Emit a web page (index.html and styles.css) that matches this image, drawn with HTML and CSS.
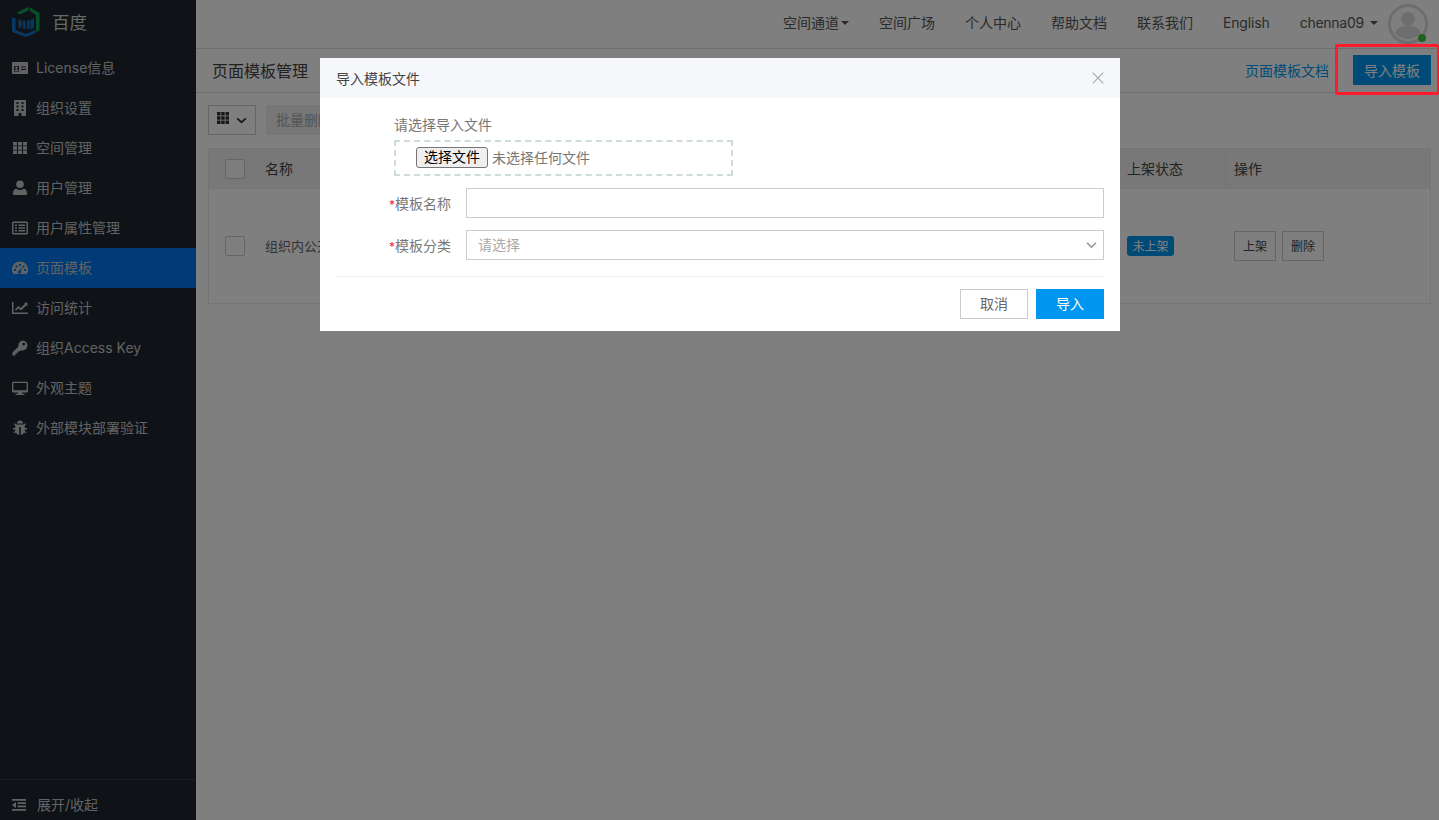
FILE: index.html
```html
<!DOCTYPE html>
<html lang="zh-CN">
<head>
<meta charset="utf-8">
<title>页面模板管理</title>
<link rel="stylesheet" href="styles.css">
</head>
<body>
<div class="app">
  <aside class="sidebar">
    <div class="brand">
      <svg class="logo" viewBox="0 0 28 30" width="28" height="30">
        <path fill="#10a050" d="M5 5.500 16 0l1 3-9 4.500zM18 .5l9.500 5.500v17L24 25V8l-6-4z"/>
        <path fill="#1273c4" d="M0 10l3.500 1.500V23L14 27l9-4 1 3-10 4-14-5z"/>
        <path fill="#1273c4" d="M6.500 12.500 10 14v6l-1.500-.6v2.200l-2-.8zM11 13l2.500 1v8.500L11 21.500zM15 14l2.500-1v8.500l-2.500 1zM18.500 13 22 11.500v9.500l-3.500 1.300z"/>
      </svg>
      <span class="brand-name">百度</span>
    </div>
    <nav class="menu">
      <a class="menu-item"><svg class="ico" viewBox="0 0 16 16"><path fill-rule="evenodd" d="M0 2h16v12H0zM2 6v6h5V6zm7 .5v1h5v-1zm0 2.500v1h5V9z"/><circle cx="4.500" cy="7.800" r="1.300"/><path d="M2.500 11.500c0-3 4-3 4 0z"/></svg>License信息</a>
      <a class="menu-item"><svg class="ico" viewBox="0 0 16 16"><path fill-rule="evenodd" d="M2 0h12v16H9.500v-3h-3v3H2zm2.500 2v2h2V2zm0 3.500v2h2v-2zm0 3.500v2h2V9zm5-7v2h2V2zm0 3.500v2h2v-2zm0 3.500v2h2V9z"/></svg>组织设置</a>
      <a class="menu-item"><svg class="ico" viewBox="0 0 16 16"><path d="M1 2h4v3.500H1zm5 0h4v3.500H6zm5 0h4v3.500h-4zM1 6.300h4v3.500H1zm5 0h4v3.500H6zm5 0h4v3.500h-4zM1 10.600h4v3.500H1zm5 0h4v3.500H6zm5 0h4v3.500h-4z"/></svg>空间管理</a>
      <a class="menu-item"><svg class="ico" viewBox="0 0 16 16"><circle cx="8" cy="4.300" r="3.800"/><path d="M1.800 15c-.8 0-1-.5-1-1.200 0-3 1.500-5 3.700-5 1 .8 2.200 1.200 3.500 1.200s2.500-.4 3.500-1.200c2.200 0 3.700 2 3.700 5 0 .7-.2 1.200-1 1.200z"/></svg>用户管理</a>
      <a class="menu-item"><svg class="ico" viewBox="0 0 16 16"><path fill-rule="evenodd" d="M1.500 1.500h13A1.500 1.500 0 0 1 16 3v10a1.500 1.500 0 0 1-1.500 1.500h-13A1.500 1.500 0 0 1 0 13V3a1.500 1.500 0 0 1 1.500-1.500zm0 1.500v10h13V3zM3 4.500h2V6H3zm3.500 0H13V6H6.500zM3 7.300h2v1.500H3zm3.500 0H13v1.500H6.500zM3 10h2v1.500H3zm3.500 0H13v1.500H6.500z"/></svg>用户属性管理</a>
      <a class="menu-item active"><svg class="ico" viewBox="0 0 16 16"><path fill-rule="evenodd" d="M8 1.500c4.400 0 8 3.500 8 8 0 1.700-.5 3.200-1.300 4.500H1.300A8 8 0 0 1 0 9.500c0-4.500 3.600-8 8-8zM7 4v2h2V4zM3.500 5.500v2h2v-2zm7 0v2h2v-2zM2 9v2h2V9zm10 0v2h2V9zm-1.800-2L7.300 10.500a1.600 1.600 0 1 0 1.600 1.200z"/></svg>页面模板</a>
      <a class="menu-item"><svg class="ico" viewBox="0 0 16 16"><path d="M0 2h1.500v10.500H16V14H0z"/><path d="M3 9.500 6.300 6l2.500 2L13 3.800l-1-1h3.500v3.500l-1-1-5.500 5.200L6.500 8.300 4 10.800z"/></svg>访问统计</a>
      <a class="menu-item"><svg class="ico" viewBox="0 0 16 16"><path fill-rule="evenodd" d="M10.500 0.500a5 5 0 1 1-1.800 9.700L7.500 11.500H5.500v2h-2V15.500H.5v-3l6-6A5 5 0 0 1 10.500.5zm1.200 2.200a1.400 1.400 0 1 0 0 2.800 1.400 1.400 0 0 0 0-2.800z"/></svg>组织Access Key</a>
      <a class="menu-item"><svg class="ico" viewBox="0 0 18 16"><path fill-rule="evenodd" d="M1.500 1h15A1.500 1.500 0 0 1 18 2.500v9a1.500 1.500 0 0 1-1.500 1.500H11l.5 1.500H14V16H4v-1.500h2.500L7 13H1.500A1.500 1.500 0 0 1 0 11.500v-9A1.500 1.500 0 0 1 1.500 1zm0 1.500v8h15v-8z"/></svg>外观主题</a>
      <a class="menu-item"><svg class="ico" viewBox="0 0 16 16"><path d="M5 3.500a3 3 0 0 1 6 0zM4.200 4.500h7.600l1.200-1.300 1 1-1.300 1.300V8H15v1.500h-2.300v1.300l1.700 1.700-1 1-1.300-1.300A4.200 4.200 0 0 1 8.800 15V7h-1.600v8a4.200 4.200 0 0 1-3.300-2.800L2.600 13.500l-1-1 1.700-1.700V9.500H1V8h2.300V5.500L2 4.200l1-1z"/></svg>外部模块部署验证</a>
    </nav>
    <div class="collapse"><svg class="ico" viewBox="0 0 16 16"><path d="M1 2h14v1.800H1zM6.500 5.200H15V7H6.500zM6.500 8.500H15v1.800H6.500zM1 12h14v1.800H1zM5 5v6L1 8z"/></svg><span>展开/收起</span></div>
  </aside>

  <div class="main">
    <header class="topbar">
      <a class="top-link">空间通道<i class="caret tight"></i></a>
      <a class="top-link">空间广场</a>
      <a class="top-link">个人中心</a>
      <a class="top-link">帮助文档</a>
      <a class="top-link">联系我们</a>
      <a class="top-link lang">English</a>
      <a class="user">chenna09<i class="caret"></i></a>
      <span class="avatar">
        <svg viewBox="0 0 40 40" width="40" height="40">
          <circle cx="20" cy="20" r="18.500" fill="#fff" stroke="#dcdcdc" stroke-width="3"/>
          <circle cx="20" cy="15" r="7" fill="#dcdcdc"/>
          <path d="M7 29c2-6 8-7 13-7s11 1 13 7a17 17 0 0 1-26 0z" fill="#dcdcdc"/>
        </svg>
        <i class="status"></i>
      </span>
    </header>

    <div class="pagehead">
      <h1 class="pagetitle">页面模板管理</h1>
      <a class="doc-link">页面模板文档</a>
      <button class="btn-primary">导入模板</button>
    </div>

    <div class="content">
      <div class="toolbar">
        <button class="btn-grid">
          <svg class="grid-ico" viewBox="0 0 12 12" width="12" height="12"><path fill="#333" d="M0 0h3.500v3.500H0zm4.200 0h3.500v3.500H4.200zm4.300 0H12v3.500H8.500zM0 4.200h3.500v3.500H0zm4.200 0h3.500v3.500H4.200zm4.300 0H12v3.500H8.500zM0 8.500h3.500V12H0zm4.200 0h3.500V12H4.200zm4.300 0H12V12H8.500z"/></svg>
          <svg viewBox="0 0 12 8" width="11" height="7"><path fill="none" stroke="#333" stroke-width="2" d="M1 1.500 6 6l5-4.500"/></svg>
        </button>
        <button class="btn-batch">批量删除</button>
      </div>

      <div class="table">
        <div class="row head">
          <div class="cell c-check"><span class="check"></span></div>
          <div class="cell c-name">名称</div>
          <div class="cell c-status">上架状态</div>
          <div class="cell c-ops">操作</div>
        </div>
        <div class="row body">
          <div class="cell c-check"><span class="check"></span></div>
          <div class="cell c-name muted">组织内公开模板</div>
          <div class="cell c-status"><span class="tag">未上架</span></div>
          <div class="cell c-ops"><button class="btn-small">上架</button><button class="btn-small">删除</button></div>
        </div>
      </div>
    </div>
  </div>
</div>

<div class="overlay">
  <div class="modal">
    <div class="modal-head">
      <span class="modal-title">导入模板文件</span>
      <svg class="close" viewBox="0 0 12 12" width="12" height="12"><path fill="none" stroke="#aaa" stroke-width="1.200" d="M.7.7l10.600 10.600M11.300.7.700 11.300"/></svg>
    </div>
    <div class="modal-body">
      <div class="file-label">请选择导入文件</div>
      <div class="file-box"><button class="file-btn">选择文件</button><span class="file-none">未选择任何文件</span></div>
      <div class="field">
        <label class="field-label"><i>*</i>模板名称</label>
        <div class="input"></div>
      </div>
      <div class="field">
        <label class="field-label"><i>*</i>模板分类</label>
        <div class="input select">
          <span class="placeholder">请选择</span>
          <svg viewBox="0 0 12 8" width="11" height="7"><path fill="none" stroke="#999" stroke-width="1.800" d="M1 1l5 5 5-5"/></svg>
        </div>
      </div>
    </div>
    <div class="modal-foot">
      <button class="btn-cancel">取消</button>
      <button class="btn-ok">导入</button>
    </div>
  </div>
</div>
<div class="annotation"></div>
</body>
</html>
```

FILE: styles.css
```css
* { box-sizing: border-box; }
html, body { margin: 0; padding: 0; height: 100%; overflow: hidden; }
body {
  font-family: Inter, "Noto Sans CJK SC", "Liberation Sans", sans-serif;
  font-size: 14px;
  color: #333;
  background: #fff;
}
button { font-family: inherit; cursor: pointer; }
a { text-decoration: none; color: inherit; }

.app { display: flex; height: 820px; }

.sidebar {
  width: 196px;
  flex: none;
  background: #1f2630;
  color: #c4c4c4;
  display: flex;
  flex-direction: column;
}
.brand { height: 48px; display: flex; align-items: center; padding: 0 0 4px 12px; gap: 12px; }
.logo { flex: none; }
.brand-name { font-size: 17.500px; color: #d0d0d0; margin-bottom: 2px; }
.menu { flex: 1; }
.menu-item { height: 40px; display: flex; align-items: center; padding: 0 0 2px 12px; }
.menu-item.active { background: #0074ee; }
.ico { width: 16px; height: 16px; fill: currentColor; flex: none; margin: 2px 8px 0 0; }
.collapse {
  height: 41px;
  border-top: 1px solid #323a45;
  display: flex;
  align-items: center;
  padding: 8px 0 0 11px;
}
.collapse .ico { margin-right: 10px; }

.main { flex: 1; min-width: 0; display: flex; flex-direction: column; }

.topbar {
  height: 49px;
  border-bottom: 1px solid #ddd;
  display: flex;
  align-items: center;
  justify-content: flex-end;
  padding: 0 11px 4px 0;
  flex: none;
}
.top-link { margin-right: 30px; color: #555; display: flex; align-items: center; }
.lang { letter-spacing: -.15px; }
.user { color: #555; display: flex; align-items: center; margin-right: 10px; letter-spacing: -.25px; }
.caret {
  width: 0; height: 0;
  margin-left: 6px;
  margin-top: 2px;
  border-left: 4px solid transparent;
  border-right: 4px solid transparent;
  border-top: 4px solid #555;
}
.caret.tight { margin-left: 2px; }
.avatar { position: relative; width: 40px; height: 40px; display: block; margin-top: 4px; }
.avatar svg { display: block; }
.status {
  position: absolute;
  right: 2px; bottom: 2px;
  width: 8px; height: 8px;
  border-radius: 50%;
  background: #3fc23f;
}

.pagehead {
  height: 44px;
  flex: none;
  border-bottom: 1px solid #ddd;
  display: flex;
  align-items: center;
  padding: 0 8px 1px 16px;
}
.pagetitle { font-size: 16px; font-weight: 400; margin: 0; color: #444; flex: 1; }
.doc-link { color: #0095ee; margin-right: 24px; }
.btn-primary {
  width: 78px; height: 30px;
  border: 0;
  background: #0095ee;
  color: #fff;
  font-size: 14px;
  padding: 0;
}

.content { padding: 12px 8px 0 12px; }
.toolbar { display: flex; gap: 10px; height: 30px; }
.btn-grid {
  width: 48px; height: 30px;
  background: #fff;
  border: 1px solid #ccc;
  display: flex;
  align-items: center;
  justify-content: center;
  gap: 7px;
  padding: 0;
}
.grid-ico { margin-bottom: 4px; }
.btn-batch {
  width: 88px; height: 30px;
  border: 0;
  background: #eee;
  color: #aaa;
  font-size: 14px;
  text-align: left;
  padding: 0 0 2px 10px;
}

.table { margin-top: 13px; border: 1px solid #e8e8e8; height: 156px; display: flex; flex-direction: column; }
.row { display: flex; align-items: stretch; }
.row.head { height: 40px; background: #f0f0f0; flex: none; color: #444; }
.row.body { flex: 1; }
.cell { display: flex; align-items: center; }
.head .cell { padding-bottom: 2px; }
.c-check { width: 56px; padding-left: 16px; flex: none; }
.head .c-check { padding-bottom: 0; }
.c-name { flex: 1; }
.body .c-name { padding-bottom: 2px; }
.c-status { width: 110px; flex: none; padding-left: 11px; }
.head .c-status { border-right: 1px solid #e8e8e8; }
.c-ops { width: 204px; flex: none; padding-left: 8px; gap: 6px; }
.muted { color: #666; font-size: 13px; }
.check {
  width: 20px; height: 20px;
  border: 1px solid #ccc;
  border-radius: 2px;
  background: #fff;
  display: block;
}
.head .c-check .check { background: #fafafa; }
.tag {
  width: 47px; height: 20px;
  border-radius: 3px;
  background: #0095ee;
  color: #fff;
  font-size: 12px;
  display: flex;
  align-items: center;
  justify-content: center;
  padding-bottom: 1px;
}
.btn-small {
  width: 42px; height: 30px;
  background: #fff;
  border: 1px solid #ccc;
  font-size: 12px;
  color: #444;
  padding: 0 0 2px;
}

.overlay {
  position: fixed;
  inset: 0;
  background: rgba(0, 0, 0, .5);
}
.modal {
  width: 800px;
  height: 273px;
  margin: 58px 0 0 320px;
  background: #fff;
  display: flex;
  flex-direction: column;
}
.modal-head {
  height: 40px;
  flex: none;
  background: #f5f7fb;
  padding: 0 16px;
  display: flex;
  align-items: center;
  justify-content: space-between;
}
.modal-title { color: #444; }
.modal-body { flex: 1; padding: 17px 16px 0; }
.file-label { margin-left: 58px; height: 20px; line-height: 20px; color: #777; }
.file-box {
  margin: 5px 0 0 58px;
  width: 339px; height: 36px;
  border: 2px dashed #cfdcdc;
  display: flex;
  align-items: center;
  padding: 0 0 1px 20px;
}
.file-btn {
  width: 72px; height: 21px;
  border: 1px solid #767676;
  border-radius: 3px;
  background: #efefef;
  color: #000;
  font-size: 14px;
  line-height: 1;
  padding: 0 0 2px;
}
.file-none { margin: 0 0 2px 4px; color: #777; }
.field { display: flex; align-items: center; margin-top: 12px; }
.field-label { width: 115px; flex: none; color: #777; text-align: right; }
.field-label i { color: #f5222d; font-style: normal; font-size: 12px; }
.input {
  margin-left: 15px;
  flex: 1;
  height: 30px;
  border: 1px solid #ccc;
  background: #fff;
}
.select {
  display: flex;
  align-items: center;
  justify-content: space-between;
  padding: 0 6px 0 11px;
  color: #aaa;
}
.placeholder { margin-bottom: 2px; }
.modal-foot {
  height: 55px;
  flex: none;
  margin: 0 16px;
  border-top: 1px solid #eef0f5;
  display: flex;
  justify-content: flex-end;
  align-items: flex-start;
  gap: 8px;
  padding-top: 12px;
}
.btn-cancel, .btn-ok { width: 68px; height: 30px; font-size: 14px; padding: 0 0 2px; }
.btn-cancel { background: #fff; border: 1px solid #ccc; color: #666; }
.btn-ok { background: #0095ee; border: 0; color: #fff; }

.annotation {
  position: fixed;
  left: 1335px;
  top: 44px;
  width: 104px;
  height: 51px;
  border: 3px solid #ff1a2e;
  border-right-width: 2px;
  border-radius: 2px;
}
```
